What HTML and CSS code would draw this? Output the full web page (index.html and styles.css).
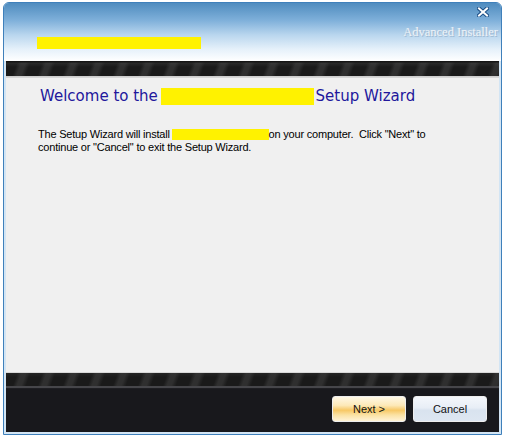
FILE: index.html
```html
<!DOCTYPE html>
<html>
<head>
<meta charset="utf-8">
<link rel="stylesheet" href="styles.css">
</head>
<body>
<div class="window">
  <div class="header">
    <div class="brand-area"><span class="redact brand"></span></div>
    <div class="header-right">
      <svg class="close" width="12" height="10" viewBox="0 0 12 10">
        <path d="M2 1.5 L10 8.5 M10 1.5 L2 8.5" stroke="#1d4f86" stroke-width="4" stroke-linecap="square"/>
        <path d="M2 1.5 L10 8.5 M10 1.5 L2 8.5" stroke="#ffffff" stroke-width="2" stroke-linecap="square"/>
      </svg>
      <span class="vendor">Advanced Installer</span>
    </div>
  </div>
  <div class="inner">
    <div class="stripe stripe-top"></div>
    <div class="content">
      <h1 class="title">Welcome to the <span class="redact title-redact"></span>Setup Wizard</h1>
      <p class="intro">The Setup Wizard will install <span class="redact intro-redact"></span>on your computer.&nbsp; Click "Next" to<br>continue or "Cancel" to exit the Setup Wizard.</p>
    </div>
    <div class="stripe stripe-bottom"></div>
    <div class="footer">
      <button class="btn btn-next">Next &gt;</button>
      <button class="btn btn-cancel">Cancel</button>
    </div>
  </div>
</div>
</body>
</html>
```
FILE: styles.css
```css
html, body {
  margin: 0;
  padding: 0;
  background: #ffffff;
}
.window {
  box-sizing: border-box;
  width: 499px;
  height: 433px;
  margin: 2px 0 0 3px;
  border: 1px solid #3f80bb;
  border-radius: 6px 6px 0 0;
  background: #d3e5f4;
  display: flex;
  flex-direction: column;
  overflow: hidden;
}
.header {
  height: 58px;
  flex: none;
  display: flex;
  justify-content: space-between;
  background: linear-gradient(to bottom, #4f8cbf 0%, #7fb0da 30%, #b9d6ee 55%, #e6f1fa 80%, #ffffff 100%);
}
.brand-area {
  padding: 34px 0 0 33px;
}
.redact {
  display: inline-block;
  background: #fff200;
  vertical-align: top;
}
.brand {
  width: 164px;
  height: 12px;
}
.header-right {
  display: flex;
  flex-direction: column;
  align-items: flex-end;
  padding: 4px 3px 0 0;
}
.close {
  display: block;
  margin-right: 9px;
}
.vendor {
  margin-top: 8px;
  font-family: "Liberation Serif", "DejaVu Serif", serif;
  font-size: 12.5px;
  line-height: 14px;
  color: #edf3f9;
  text-shadow: 1px 1px 0 #9fbad3, -1px 0 0 #b8cfe3;
}
.inner {
  flex: 1;
  margin: 0 2px 2px 2px;
  display: flex;
  flex-direction: column;
}
.stripe {
  height: 17px;
  flex: none;
  background-color: #1c1c1c;
}
.stripe-top {
  background:
    linear-gradient(to bottom, #141414 0, #141414 1px, rgba(70,70,70,0.35) 2px, rgba(0,0,0,0) 6px, rgba(0,0,0,0) 15px, #c9c9c9 15px, #dcdcdc 17px),
    repeating-linear-gradient(110deg, #1a1a1a 0, #1a1a1a 11px, #2f2f2f 15px, #2f2f2f 19px, #1a1a1a 23.5px);
}
.stripe-bottom {
  background:
    linear-gradient(to bottom, #d8d8d8 0, #d8d8d8 1px, rgba(60,60,60,0.3) 1px, rgba(0,0,0,0) 5px, rgba(0,0,0,0) 14px, #46464a 14px, #46464a 16px, #1e1e22 16px),
    repeating-linear-gradient(110deg, #1a1a1a 0, #1a1a1a 11px, #2f2f2f 15px, #2f2f2f 19px, #1a1a1a 23.5px);
}
.content {
  flex: 1;
  background: #f0f0f0;
  padding: 10px 0 0 32px;
}
.title {
  margin: 0;
  padding-left: 2px;
  font-family: "DejaVu Sans", Verdana, sans-serif;
  font-weight: normal;
  font-size: 15px;
  line-height: 17px;
  color: #22179c;
  white-space: nowrap;
}
.title-redact {
  width: 153px;
  height: 17px;
  margin-left: -2px;
  margin-right: 2px;
}
.intro {
  margin: 23px 0 0 0;
  font-family: "Liberation Sans", Arial, sans-serif;
  font-size: 11px;
  line-height: 13px;
  letter-spacing: -0.2px;
  color: #000000;
  white-space: nowrap;
}
.intro-redact {
  width: 97px;
  height: 11px;
  margin-top: 1px;
  margin-left: -1px;
}
.footer {
  height: 43px;
  flex: none;
  background: #18181c;
  display: flex;
  justify-content: flex-end;
  align-items: flex-start;
  gap: 7px;
  padding: 7px 12px 0 0;
  box-sizing: border-box;
}
.btn {
  box-sizing: border-box;
  width: 74px;
  height: 26px;
  padding: 0;
  border: 1px solid #eeeeee;
  border-radius: 3px;
  font-family: "Liberation Sans", Arial, sans-serif;
  font-size: 11px;
  color: #111111;
}
.btn-next {
  background: linear-gradient(to bottom, #fff8e6 0%, #fde9b8 35%, #f7c865 55%, #fbe2a4 75%, #fff3d6 100%);
}
.btn-cancel {
  background: linear-gradient(to bottom, #f4f7fb 0%, #e8eef6 45%, #d9e3ef 55%, #dde6f1 100%);
}
```
